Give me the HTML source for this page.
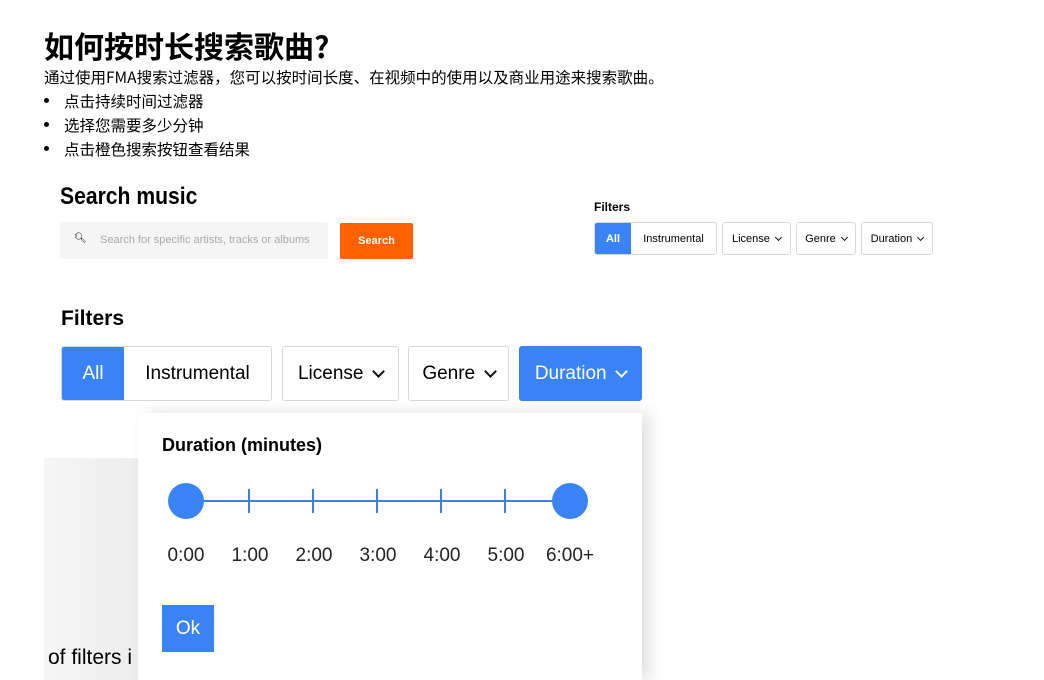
<!DOCTYPE html>
<html><head><meta charset="utf-8"><style>
html,body{margin:0;width:1044px;height:680px;overflow:hidden}
body{background:#fff;position:relative;font-family:"Liberation Sans","Noto Sans CJK SC",sans-serif;color:#000}
.a{position:absolute;white-space:nowrap}
.cj{font-family:"Noto Sans CJK SC","WenQuanYi Zen Hei",sans-serif}
.b{position:absolute;box-sizing:border-box;border:1px solid #d8d8d8;border-radius:3px;background:#fff;display:flex;align-items:center;justify-content:center}
.chev{display:inline-block;border-right:2px solid #111;border-bottom:2px solid #111;transform:rotate(45deg)}
.bl{background:#3a83f7;color:#fff;border-color:#3a83f7}
.lbl{position:absolute;top:545px;font-size:19px;color:#222;width:60px;text-align:center}
.dot{position:absolute;left:44px;width:5px;height:5px;border-radius:50%;background:#000}
</style></head><body>
<div class="a cj" style="left:44px;top:25px;font-size:30px;font-weight:bold;line-height:40px">如何按时长搜索歌曲?</div>
<div class="a cj" style="left:44px;top:66px;font-size:15.5px;line-height:22px">通过使用FMA搜索过滤器，您可以按时间长度、在视频中的使用以及商业用途来搜索歌曲。</div>
<div class="dot" style="top:98px"></div><div class="dot" style="top:122px"></div><div class="dot" style="top:146px"></div>
<div class="a cj" style="left:64px;top:89px;font-size:15.5px;line-height:24px">点击持续时间过滤器<br>选择您需要多少分钟<br>点击橙色搜索按钮查看结果</div>

<div class="a" style="left:60px;top:183px;font-size:24px;font-weight:bold;transform:scaleX(.88);transform-origin:left">Search music</div>
<div class="a" style="left:60px;top:222px;width:268px;height:37px;background:#f5f5f5;border-radius:2px"></div>
<div class="a" style="left:74px;top:233px;font-size:10px">&#x1F50D;&#xFE0E;</div>
<div class="a" style="left:100px;top:234px;font-size:11px;color:#aaa">Search for specific artists, tracks or albums</div>
<div class="a" style="left:340px;top:223px;width:73px;height:36px;background:#ff6100;border-radius:2px;color:#fff;font-size:11px;font-weight:bold;display:flex;align-items:center;justify-content:center">Search</div>

<div class="a" style="left:594px;top:200px;font-size:12px;font-weight:bold">Filters</div>
<div class="b" style="left:594px;top:222px;width:123px;height:33px;justify-content:flex-start;overflow:hidden"><div class="bl" style="width:36px;height:33px;display:flex;align-items:center;justify-content:center;font-size:11px;font-weight:bold">All</div><div style="flex:1;text-align:center;font-size:11px">Instrumental</div></div>
<div class="b" style="left:722px;top:222px;width:69px;height:33px;font-size:11px">License&nbsp;&nbsp;<span class="chev" style="width:4px;height:4px;margin-top:-3px;border-width:1.5px"></span></div>
<div class="b" style="left:796px;top:222px;width:60px;height:33px;font-size:11px">Genre&nbsp;&nbsp;<span class="chev" style="width:4px;height:4px;margin-top:-3px;border-width:1.5px"></span></div>
<div class="b" style="left:861px;top:222px;width:72px;height:33px;font-size:11px">Duration&nbsp;&nbsp;<span class="chev" style="width:4px;height:4px;margin-top:-3px;border-width:1.5px"></span></div>

<div class="a" style="left:44px;top:458px;width:100px;height:222px;background:linear-gradient(90deg,#f6f6f6,#ececec)"></div>
<div class="a" style="left:48px;top:641px;font-size:21px;line-height:34px">of filters i</div>
<div class="a" style="left:61px;top:307px;font-size:21px;font-weight:bold">Filters</div>
<div class="b" style="left:61px;top:346px;width:211px;height:55px;justify-content:flex-start;overflow:hidden"><div class="bl" style="width:62px;height:55px;display:flex;align-items:center;justify-content:center;font-size:19px">All</div><div style="flex:1;text-align:center;font-size:19px">Instrumental</div></div>
<div class="b" style="left:282px;top:346px;width:117px;height:55px;font-size:19px">License&nbsp;&nbsp;<span class="chev" style="width:7px;height:7px;margin-top:-5px"></span></div>
<div class="b" style="left:408px;top:346px;width:101px;height:55px;font-size:19px">Genre&nbsp;&nbsp;<span class="chev" style="width:7px;height:7px;margin-top:-5px"></span></div>
<div class="b bl" style="left:519px;top:346px;width:123px;height:55px;font-size:19px">Duration&nbsp;&nbsp;<span class="chev" style="width:7px;height:7px;margin-top:-5px;border-color:#fff"></span></div>

<div class="a" style="left:138px;top:413px;width:504px;height:267px;background:#fff;box-shadow:8px 0 14px rgba(0,0,0,.12)"></div>
<div class="a" style="left:162px;top:435px;font-size:18px;font-weight:bold">Duration (minutes)</div>
<svg class="a" style="left:0;top:0" width="1044" height="680"><line x1="186" y1="501" x2="570" y2="501" stroke="#3a7fe6" stroke-width="2"/>
<g stroke="#3a7fe6" stroke-width="2"><line x1="249" y1="489" x2="249" y2="513"/><line x1="313" y1="489" x2="313" y2="513"/><line x1="377" y1="489" x2="377" y2="513"/><line x1="441" y1="489" x2="441" y2="513"/><line x1="505" y1="489" x2="505" y2="513"/></g>
<circle cx="186" cy="501" r="18" fill="#3a83f7"/><circle cx="570" cy="501" r="18" fill="#3a83f7"/></svg>
<div class="lbl" style="left:156px">0:00</div><div class="lbl" style="left:220px">1:00</div><div class="lbl" style="left:284px">2:00</div><div class="lbl" style="left:348px">3:00</div><div class="lbl" style="left:412px">4:00</div><div class="lbl" style="left:476px">5:00</div><div class="lbl" style="left:540px">6:00+</div>
<div class="a" style="left:162px;top:605px;width:52px;height:47px;background:#3a83f7;color:#fff;font-size:19px;display:flex;align-items:center;justify-content:center">Ok</div>
</body></html>
